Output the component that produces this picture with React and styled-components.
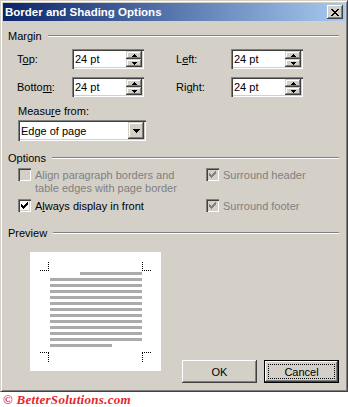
import React from "react"
import styled, { createGlobalStyle, css } from "styled-components"

const GlobalStyle = createGlobalStyle`
  body {
    margin: 0;
    background: #fff;
    font-family: "Liberation Sans", Tahoma, sans-serif;
    font-size: 11px;
    color: #000;
  }
`

const Window = styled.div`
  width: 348px;
  height: 392px;
  box-sizing: border-box;
  background: #d4d0c8;
  border: 1px solid;
  border-color: #d4d0c8 #404040 #404040 #d4d0c8;
  box-shadow: inset 1px 1px #fff, inset -1px -1px #808080;
  padding: 2px;
  display: flex;
  flex-direction: column;
`

const TitleBar = styled.div`
  height: 18px;
  display: flex;
  align-items: center;
  justify-content: space-between;
  padding: 0 2px 0 2px;
  background: linear-gradient(to right, #0a246a, #a6caf0);
`

const Title = styled.span`
  color: #fff;
  font-weight: bold;
  font-size: 11.5px;
`

const raised = css`
  background: #d4d0c8;
  box-shadow: inset -1px -1px #404040, inset 1px 1px #fff, inset -2px -2px #808080;
`

const CloseButton = styled.div`
  ${raised};
  width: 16px;
  height: 14px;
  display: flex;
  align-items: center;
  justify-content: center;
`

const Body = styled.div`
  flex: 1;
  display: flex;
  flex-direction: column;
  padding: 0 6px 0 5px;
`

const GroupHeader = styled.div`
  display: flex;
  align-items: center;
  gap: 6px;
  height: 13px;
  margin-top: ${(p) => p.$top}px;
  &::after {
    content: "";
    flex: 1;
    border-top: 1px solid #808080;
    border-bottom: 1px solid #fff;
  }
`

const MarginGrid = styled.div`
  display: grid;
  grid-template-columns: 55px 104px 55px 72px;
  grid-auto-rows: 20px;
  row-gap: 8px;
  align-items: center;
  padding-left: 9px;
  margin-top: 7px;
`

const Label = styled.span`
  white-space: nowrap;
`

const sunken = css`
  background: #fff;
  box-shadow: inset 1px 1px #808080, inset 2px 2px #404040, inset -1px -1px #fff,
    inset -2px -2px #d4d0c8;
`

const EditBox = styled.div`
  ${sunken};
  width: ${(p) => p.$width}px;
  height: ${(p) => p.$height}px;
  box-sizing: border-box;
  padding: 2px;
  display: flex;
  align-items: stretch;
`

const BoxText = styled.span`
  flex: 1;
  display: flex;
  align-items: center;
  padding-left: 1px;
  white-space: nowrap;
`

const SpinColumn = styled.div`
  flex: none;
  width: 16px;
  display: flex;
  flex-direction: column;
`

const ArrowButton = styled.div`
  flex: ${(p) => (p.$fixed ? "none" : "1")};
  width: 16px;
  display: flex;
  align-items: center;
  justify-content: center;
  background: #d4d0c8;
  box-shadow: inset -1px -1px #404040, inset 1px 1px #d4d0c8, inset -2px -2px #808080,
    inset 2px 2px #fff;
`

const SubLabel = styled.div`
  margin: 8px 0 0 10px;
  height: 13px;
  line-height: 13px;
`

const SelectWrap = styled.div`
  margin: 2px 0 0 10px;
`

const OptionsGrid = styled.div`
  display: grid;
  grid-template-columns: 188px 1fr;
  row-gap: 5px;
  margin: 5px 0 0 10px;
`

const CheckRow = styled.div`
  display: flex;
  align-items: flex-start;
  gap: 4px;
  color: ${(p) => (p.$disabled ? "#808080" : "#000")};
  line-height: 13px;
`

const CheckBox = styled.div`
  flex: none;
  width: 13px;
  height: 13px;
  box-sizing: border-box;
  background: ${(p) => (p.$disabled ? "#d4d0c8" : "#fff")};
  box-shadow: inset 1px 1px #808080, inset 2px 2px #404040, inset -1px -1px #fff,
    inset -2px -2px #d4d0c8;
  margin-top: -1px;
`

const Footer = styled.div`
  flex: 1;
  display: flex;
  justify-content: space-between;
  align-items: flex-end;
  margin-top: 13px;
  padding-bottom: 6px;
`

const PreviewPage = styled.div`
  align-self: flex-start;
  width: 131px;
  height: 119px;
  margin-left: 22px;
  background: #fff;
`

const Buttons = styled.div`
  display: flex;
  gap: 7px;
`

const Button = styled.div`
  ${raised};
  position: relative;
  width: 75px;
  height: 23px;
  box-sizing: border-box;
  display: flex;
  align-items: center;
  justify-content: center;
  ${(p) =>
    p.$default &&
    css`
      border: 1px solid #000;
      &::after {
        content: "";
        position: absolute;
        inset: 3px;
        border: 1px dotted #000;
      }
    `}
`

const Copyright = styled.div`
  margin: 1px 0 0 3px;
  height: 14px;
  line-height: 14px;
  font-family: "Liberation Serif", serif;
  font-style: italic;
  font-weight: bold;
  font-size: 13px;
  color: #e3262b;
  letter-spacing: 0.3px;
`

const UpArrow = () => (
  <svg width="5" height="3" viewBox="0 0 5 3">
    <path d="M2 0h1v1h1v1h1v1H0V2h1V1h1z" fill="#000" />
  </svg>
)

const DownArrow = () => (
  <svg width="5" height="3" viewBox="0 0 5 3">
    <path d="M0 0h5v1H4v1H3v1H2V2H1V1H0z" fill="#000" />
  </svg>
)

const ComboArrow = () => (
  <svg width="7" height="4" viewBox="0 0 7 4">
    <path d="M0 0h7v1H6v1H5v1H4v1H3V3H2V2H1V1H0z" fill="#000" />
  </svg>
)

const CloseGlyph = () => {
  const rows = [
    [0, 2, 6, 2],
    [1, 2, 5, 2],
    [2, 4],
    [3, 2],
    [2, 4],
    [1, 2, 5, 2],
    [0, 2, 6, 2],
  ]
  return (
    <svg width="8" height="7" viewBox="0 0 8 7">
      {rows.map((r, y) => (
        <g key={y}>
          <rect x={r[0]} y={y} width={r[1]} height="1" fill="#000" />
          {r[2] !== undefined && <rect x={r[2]} y={y} width={r[3]} height="1" fill="#000" />}
        </g>
      ))}
    </svg>
  )
}

const CheckMark = ({ color }) => {
  const starts = [2, 3, 4, 3, 2, 1, 0]
  return (
    <svg width="13" height="13" viewBox="0 0 13 13">
      {starts.map((s, c) => (
        <rect key={c} x={3 + c} y={3 + s} width="1" height="3" fill={color} />
      ))}
    </svg>
  )
}

const Spin = ({ value }) => (
  <EditBox $width={72} $height={20}>
    <BoxText>{value}</BoxText>
    <SpinColumn>
      <ArrowButton>
        <UpArrow />
      </ArrowButton>
      <ArrowButton>
        <DownArrow />
      </ArrowButton>
    </SpinColumn>
  </EditBox>
)

const Check = ({ checked, disabled, children }) => (
  <CheckRow $disabled={disabled}>
    <CheckBox $disabled={disabled}>
      {checked && <CheckMark color={disabled ? "#808080" : "#000"} />}
    </CheckBox>
    <span>{children}</span>
  </CheckRow>
)

const PagePreview = () => {
  const lines = []
  for (let i = 0; i < 13; i++) {
    const x = i === 0 ? 50 : 20
    const w = i === 0 ? 62 : i === 12 ? 62 : 92
    lines.push(<rect key={i} x={x} y={20 + i * 6} width={w} height="3" fill="#ababab" />)
  }
  const dot = { stroke: "#000", strokeWidth: 1, strokeDasharray: "1 1", fill: "none" }
  return (
    <svg width="131" height="119" viewBox="0 0 131 119">
      <path d="M10 18.5H19M18.5 10V18" {...dot} />
      <path d="M112.5 10V18M112 18.5H122" {...dot} />
      <path d="M10 100.5H19M18.5 101V110" {...dot} />
      <path d="M112.5 101V110M112 100.5H122" {...dot} />
      {lines}
    </svg>
  )
}

export default function App() {
  return (
    <>
      <GlobalStyle />
      <Window>
        <TitleBar>
          <Title>Border and Shading Options</Title>
          <CloseButton>
            <CloseGlyph />
          </CloseButton>
        </TitleBar>
        <Body>
          <GroupHeader $top={8}>Margin</GroupHeader>
          <MarginGrid>
            <Label>
              T<u>o</u>p:
            </Label>
            <Spin value="24 pt" />
            <Label>
              L<u>e</u>ft:
            </Label>
            <Spin value="24 pt" />
            <Label>
              Botto<u>m</u>:
            </Label>
            <Spin value="24 pt" />
            <Label>
              Ri<u>g</u>ht:
            </Label>
            <Spin value="24 pt" />
          </MarginGrid>
          <SubLabel>
            Measu<u>r</u>e from:
          </SubLabel>
          <SelectWrap>
            <EditBox $width={128} $height={21}>
              <BoxText>Edge of page</BoxText>
              <ArrowButton $fixed>
                <ComboArrow />
              </ArrowButton>
            </EditBox>
          </SelectWrap>
          <GroupHeader $top={10}>Options</GroupHeader>
          <OptionsGrid>
            <Check disabled>
              Align paragraph borders and
              <br />
              table edges with page border
            </Check>
            <Check disabled checked>
              Surround header
            </Check>
            <Check checked>
              A<u>l</u>ways display in front
            </Check>
            <Check disabled checked>
              Surround footer
            </Check>
          </OptionsGrid>
          <GroupHeader $top={13}>Preview</GroupHeader>
          <Footer>
            <PreviewPage>
              <PagePreview />
            </PreviewPage>
            <Buttons>
              <Button>OK</Button>
              <Button $default>Cancel</Button>
            </Buttons>
          </Footer>
        </Body>
      </Window>
      <Copyright>© BetterSolutions.com</Copyright>
    </>
  )
}
